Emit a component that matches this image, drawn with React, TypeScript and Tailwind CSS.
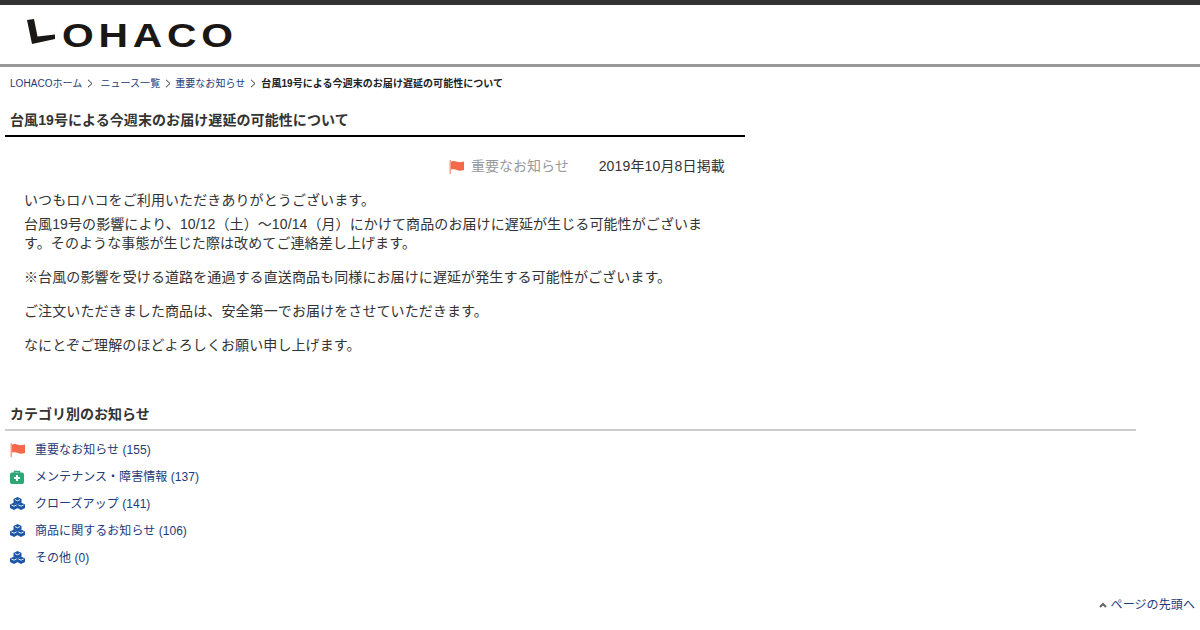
import React from "react";

const Flag = () => (
  <svg width="15" height="15" viewBox="0 0 15 15" className="shrink-0">
    <rect x="0.5" y="1" width="1.5" height="14" fill="#f7a08a" />
    <path d="M2 2.5 C4 1.5 6 2 8 2.8 C10 3.4 12 3.2 15 2.5 L15 11 C12 11.8 10 12 8 11 C6 10 4 10 2 10.5 Z" fill="#f4694a" />
  </svg>
);
const Med = () => (
  <svg width="14" height="14" viewBox="0 0 14 14">
    <path d="M4.5 3V1.5h5V3" fill="none" stroke="#2aa876" strokeWidth="1.4" />
    <rect x="0" y="2.5" width="14" height="11.5" rx="2" fill="#2aa876" />
    <path d="M6 5h2v2h2v2H8v2H6V9H4V7h2z" fill="#fff" />
  </svg>
);
const Boxes = () => (
  <svg width="15" height="13" viewBox="0 0 15 13">
    <path d="M7.5 0 L11.5 2 V5.5 L7.5 7.5 L3.5 5.5 V2 Z" fill="#1a55a8" />
    <path d="M4 5.6 L7.8 7.6 V11 L4 13 L0 11 V7.6 Z" fill="#1a55a8" />
    <path d="M11 5.6 L15 7.6 V11 L11 13 L7.2 11 V7.6 Z" fill="#1a55a8" />
    <path d="M5 2.6 L7.5 3.8 L10 2.6 M1.4 8 L4 9.2 L6.6 8 M8.4 8 L11 9.2 L13.6 8" fill="none" stroke="#fff" strokeWidth="0.9" />
  </svg>
);
const Chev = () => (
  <svg width="6" height="9" viewBox="0 0 6 9" className="shrink-0">
    <path d="M1 0.8 L5 4.5 L1 8.2" fill="none" stroke="#333" strokeWidth="1" />
  </svg>
);

const cats: [string, React.ReactNode][] = [
  ["重要なお知らせ (155)", <Flag />],
  ["メンテナンス・障害情報 (137)", <Med />],
  ["クローズアップ (141)", <Boxes />],
  ["商品に関するお知らせ (106)", <Boxes />],
  ["その他 (0)", <Boxes />],
];

export default function App() {
  return (
    <div className="relative h-[630px] w-[1200px] overflow-hidden bg-white font-['Liberation_Sans','Noto_Sans_CJK_JP',sans-serif] text-[#333]">
      <header className="h-[67px] border-t-[5px] border-b-[3px] border-t-[#333] border-b-[#999]">
        <div className="flex items-start pl-[27px] pt-[13px]">
          <svg width="30" height="30" viewBox="0 0 30 30" className="shrink-0">
            <path d="M0 2 L7 1 L10.5 18.5 L28 16.5 L28 21 L5 26 Z" fill="#1a1714" />
          </svg>
          <span className="ml-[5px] mt-[-1px] inline-block origin-left scale-x-[1.2] text-[34px] leading-[36px] font-bold tracking-[4px] text-[#1a1714] font-['Liberation_Sans',sans-serif]">
            OHACO
          </span>
        </div>
      </header>

      <nav className="flex h-[33px] items-center pl-[10px] text-[10px] tracking-[0.05px]">
        <a className="text-[#1d3a7a]">LOHACOホーム</a>
        <span className="ml-[5px] mr-[7px]"><Chev /></span>
        <a className="text-[#1d3a7a]">ニュース一覧</a>
        <span className="ml-[5px] mr-[4px]"><Chev /></span>
        <a className="text-[#1d3a7a]">重要なお知らせ</a>
        <span className="ml-[5px] mr-[5px]"><Chev /></span>
        <b className="font-bold text-[#222]">台風19号による今週末のお届け遅延の可能性について</b>
      </nav>

      <main className="ml-[5px] w-[740px]">
        <h1 className="mt-[3px] h-[34px] border-b-2 border-black pl-[5px] pt-[7px] text-[14px] leading-[20px] font-bold tracking-[0.08px] text-[#333]">
          台風19号による今週末のお届け遅延の可能性について
        </h1>
        <div className="mt-[19px] flex h-[20px] items-center justify-end pr-[20px] text-[14px] leading-[20px]">
          <Flag />
          <span className="ml-[7px] text-[#999]">重要なお知らせ</span>
          <span className="ml-[30px] tracking-[0.15px] text-[#333]">2019年10月8日掲載</span>
        </div>
        <div className="mt-[15px] w-[700px] pl-[19px] text-[14px] leading-[19px] tracking-[0.1px] text-[#333]">
          <p>いつもロハコをご利用いただきありがとうございます。</p>
          <p className="mt-[5px]">台風19号の影響により、10/12（土）～10/14（月）にかけて商品のお届けに遅延が生じる可能性がございます。そのような事態が生じた際は改めてご連絡差し上げます。</p>
          <p className="mt-[15px]">※台風の影響を受ける道路を通過する直送商品も同様にお届けに遅延が発生する可能性がございます。</p>
          <p className="mt-[15px]">ご注文いただきました商品は、安全第一でお届けをさせていただきます。</p>
          <p className="mt-[15px]">なにとぞご理解のほどよろしくお願い申し上げます。</p>
        </div>
      </main>

      <section className="ml-[5px] mt-[49px] w-[1131px]">
        <h2 className="h-[27px] border-b-2 border-[#ccc] pl-[5px] text-[14px] leading-[20px] font-bold text-[#333]">カテゴリ別のお知らせ</h2>
        <ul className="mt-[5px] pl-[5px] text-[12px] tracking-[0.05px] text-[#1d3a7a]">
          {cats.map(([t, icon]) => (
            <li key={t} className="flex h-[27px] items-center">
              <span className="flex w-[25px] shrink-0 items-center">{icon}</span>
              <a>{t}</a>
            </li>
          ))}
        </ul>
      </section>

      <div className="absolute right-[5px] top-[597px] flex h-[16px] items-center text-[12px] tracking-[0.1px] text-[#1d3a7a]">
        <svg width="8" height="6" viewBox="0 0 8 6" className="mr-[4px]">
          <path d="M1 5 L4 2 L7 5" fill="none" stroke="#666" strokeWidth="2" />
        </svg>
        <a>ページの先頭へ</a>
      </div>
    </div>
  );
}
